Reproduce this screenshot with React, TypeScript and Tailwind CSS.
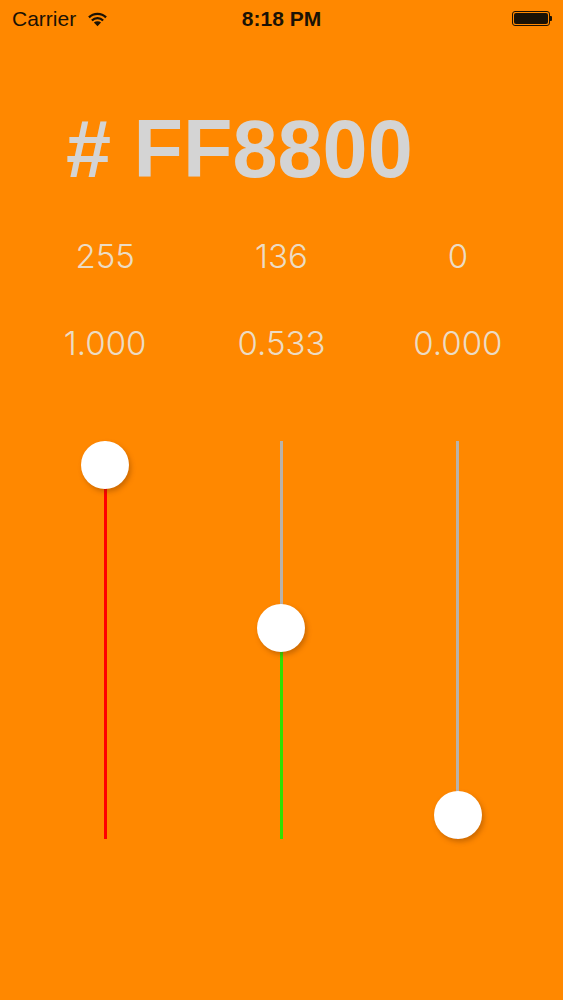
import React from "react";

// Channel values for #FF8800
const CHANNELS = [
  { value: 255, fill: "bg-[#ff0000]" },
  { value: 136, fill: "bg-[#33e000]" },
  { value: 0, fill: "bg-[#0000ff]" },
];

const TRACK = 398;
const THUMB = 48;

function StatusBar() {
  return (
    <div className="relative flex h-[37px] items-center justify-between pl-[12px] pr-[11px] text-[21px] text-[#1a1205] font-['Liberation_Sans',sans-serif]">
      <div className="flex items-center gap-[11px]">
        <span>Carrier</span>
        <svg width="21" height="16" viewBox="0 0 20 15">
          <path d="M10 14.5 L6.6 10.9 A5 5 0 0 1 13.4 10.9 Z" fill="#1a1205" />
          <path d="M3.9 8.1 A8.7 8.7 0 0 1 16.1 8.1 L14.6 9.7 A6.6 6.6 0 0 0 5.4 9.7 Z" fill="#1a1205" />
          <path d="M1.1 5.2 A12.7 12.7 0 0 1 18.9 5.2 L17.4 6.8 A10.6 10.6 0 0 0 2.6 6.8 Z" fill="#1a1205" />
        </svg>
      </div>
      <span className="absolute left-1/2 -translate-x-1/2 font-bold">8:18 PM</span>
      <div className="flex items-center">
        <div className="h-[15px] w-[38px] rounded-[3px] border border-[#1a1205] p-[1px]">
          <div className="h-full w-full rounded-[2px] bg-[#1a1205]" />
        </div>
        <div className="h-[5px] w-[2px] rounded-r-[1px] bg-[#1a1205]" />
      </div>
    </div>
  );
}

function Slider({ value, fill }: { value: number; fill: string }) {
  const t = value / 255;
  const top = (1 - t) * (TRACK - THUMB);
  const center = top + THUMB / 2;
  return (
    <div className="flex justify-center">
      <div className="relative h-[398px] w-[3px]">
        <div className="absolute left-0 top-0 w-[3px] bg-[#b9b2aa]" style={{ height: center }} />
        <div className={`absolute bottom-0 left-0 w-[3px] ${fill}`} style={{ top: center }} />
        <div
          className="absolute left-1/2 h-[48px] w-[48px] -translate-x-1/2 rounded-full bg-white shadow-[2px_3px_5px_rgba(110,50,0,0.35)]"
          style={{ top }}
        />
      </div>
    </div>
  );
}

export default function App() {
  return (
    <div className="h-[1000px] w-[563px] overflow-hidden bg-[#ff8800]">
      <StatusBar />

      <div className="mt-[72px] pl-[66px] text-[81px] font-bold leading-none text-[#d4d4d4] font-['Liberation_Sans',sans-serif]">
        # FF8800
      </div>

      <div className="mt-[50px] grid grid-cols-3 px-[17px] text-[33px] font-light leading-none text-[#ecdcc4] font-['Inter',sans-serif]">
        {CHANNELS.map((c) => (
          <div key={c.value} className="text-center">
            {c.value}
          </div>
        ))}
      </div>

      <div className="mt-[54px] grid grid-cols-3 px-[17px] text-[33px] font-light leading-none text-[#ecdcc4] font-['Inter',sans-serif]">
        {CHANNELS.map((c) => (
          <div key={c.value} className="text-center">
            {(c.value / 255).toFixed(3)}
          </div>
        ))}
      </div>

      <div className="mt-[81px] grid grid-cols-3 px-[17px]">
        {CHANNELS.map((c) => (
          <Slider key={c.value} value={c.value} fill={c.fill} />
        ))}
      </div>
    </div>
  );
}
